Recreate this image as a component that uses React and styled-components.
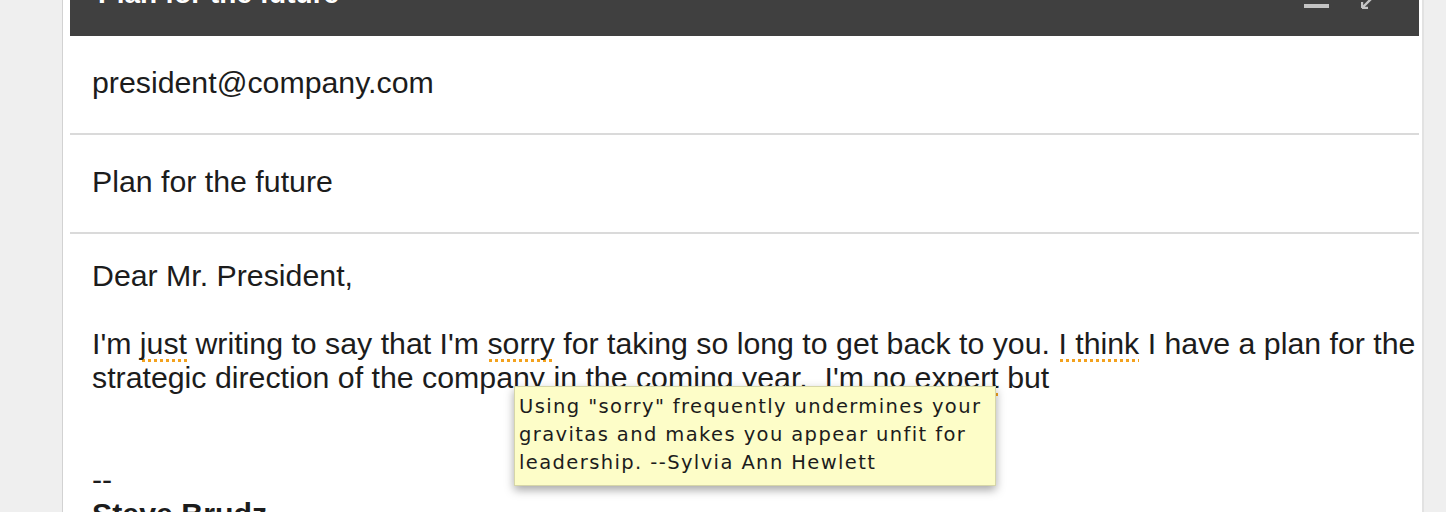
import React from "react";
import styled, { createGlobalStyle } from "styled-components";

const Global = createGlobalStyle`
  html, body {
    margin: 0;
    padding: 0;
    background: #efefef;
  }
`;

const Page = styled.div`
  display: flex;
  height: 512px;
  overflow: hidden;
  background: #efefef;
  font-family: "Liberation Sans", Arial, sans-serif;
`;

const Gutter = styled.div`
  width: 62px;
  flex-shrink: 0;
  border-right: 1px solid #d2d2d2;
`;

const Window = styled.div`
  width: 1349px;
  flex-shrink: 0;
  background: #fff;
  padding: 0 3px 0 7px;
  border-right: 2px solid #e2e2e2;
  display: flex;
  flex-direction: column;
`;

const Header = styled.div`
  height: 36px;
  flex-shrink: 0;
  background: #404040;
  display: flex;
  align-items: flex-start;
  justify-content: space-between;
  padding: 0 0 0 28px;
  overflow: hidden;
`;

const Title = styled.div`
  color: #fff;
  font-size: 28px;
  font-weight: bold;
  line-height: 28px;
  margin-top: -20px;
`;

const Controls = styled.div`
  display: flex;
  align-items: flex-start;
  gap: 32px;
  padding-right: 46px;
`;

const MinBar = styled.div`
  width: 25px;
  height: 4px;
  margin-top: 4px;
  background: #c4c4c4;
`;

const Field = styled.div`
  height: 99px;
  display: flex;
  align-items: center;
  padding: 0 22px 4px;
  box-sizing: border-box;
  border-bottom: 2px solid #dadada;
  font-size: 30.3px;
  color: #1c1c1c;
  flex-shrink: 0;
`;

const Body = styled.div`
  position: relative;
  padding: 25px 22px 0;
  font-size: 30.3px;
  line-height: 34px;
  color: #1c1c1c;
`;

const Line = styled.div`
  white-space: nowrap;
  min-height: 34px;
  font-weight: ${({ $bold }) => ($bold ? "bold" : "normal")};
`;

const Flag = styled.span`
  padding-bottom: 2px;
  background-image: linear-gradient(to right, #f3a21e 50%, transparent 0);
  background-size: 6px 3px;
  background-repeat: repeat-x;
  background-position: 2px bottom;
`;

const Tip = styled.div`
  position: absolute;
  left: 444px;
  top: 152px;
  width: 476px;
  padding: 6px 0 8px 4px;
  background: #fdfdc8;
  border: 1px solid #d6d6a8;
  box-shadow: 0 4px 9px rgba(0, 0, 0, 0.35);
  font-family: "DejaVu Sans", Verdana, sans-serif;
  font-size: 19.5px;
  letter-spacing: 1.4px;
  line-height: 28px;
  color: #1c1c1c;
  white-space: nowrap;
`;

function ExpandIcon() {
  return (
    <svg width="12" height="10" viewBox="0 0 12 10" style={{ marginTop: -1 }}>
      <path d="M1 9 L10 0 M1 9 V3 M1 9 H7" stroke="#c4c4c4" strokeWidth="2.4" fill="none" />
    </svg>
  );
}

export default function App() {
  return (
    <>
      <Global />
      <Page>
        <Gutter />
        <Window>
          <Header>
            <Title>Plan for the future</Title>
            <Controls>
              <MinBar />
              <ExpandIcon />
            </Controls>
          </Header>
          <Field>president@company.com</Field>
          <Field>Plan for the future</Field>
          <Body>
            <Line>Dear Mr. President,</Line>
            <Line />
            <Line>
              I'm <Flag>just</Flag> writing to say that I'm <Flag>sorry</Flag> for taking so long to get back to you.{" "}
              <Flag>I think</Flag> I have a plan for the
            </Line>
            <Line>
              strategic direction of the company in the coming year.&nbsp; I'm no <Flag>expert</Flag> but
            </Line>
            <Line />
            <Line />
            <Line>--</Line>
            <Line $bold>Steve Brudz</Line>
            <Tip>
              Using "sorry" frequently undermines your
              <br />
              gravitas and makes you appear unfit for
              <br />
              leadership. --Sylvia Ann Hewlett
            </Tip>
          </Body>
        </Window>
      </Page>
    </>
  );
}
